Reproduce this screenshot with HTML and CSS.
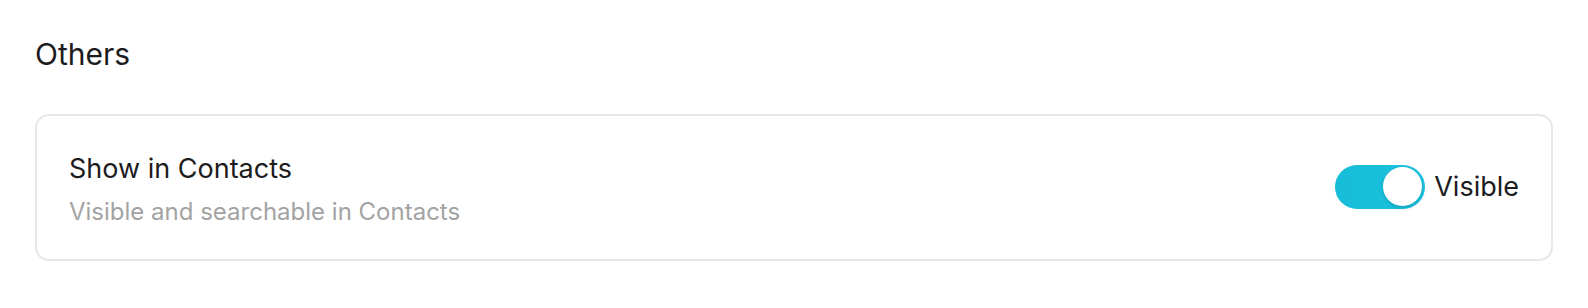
FILE: index.html
```html
<!DOCTYPE html>
<html lang="en">
<head>
<meta charset="utf-8">
<title>Others</title>
<link rel="stylesheet" href="styles.css">
</head>
<body>
<main class="page">
  <h2 class="section-title">Others</h2>
  <section class="card">
    <div class="row">
      <div class="row-text">
        <div class="row-title">Show in Contacts</div>
        <div class="row-desc">Visible and searchable in Contacts</div>
      </div>
      <label class="toggle-wrap">
        <span class="toggle on"><span class="knob"></span></span>
        <span class="toggle-label">Visible</span>
      </label>
    </div>
  </section>
</main>
</body>
</html>
```
FILE: styles.css
```css
* { box-sizing: border-box; }
html, body { margin: 0; padding: 0; background: #ffffff; }
body {
  font-family: Inter, "Noto Sans", "Liberation Sans", sans-serif;
  color: #1c1c1e;
}
.page {
  padding: 36px 35px 0 35px;
}
.section-title {
  margin: 0 0 42px 0;
  font-size: 30px;
  line-height: 36px;
  font-weight: 400;
  color: #1c1c1e;
}
.card {
  border: 2px solid #e8e8e8;
  border-radius: 14px;
  height: 147px;
  padding: 36px 32px 0 32px;
}
.row {
  display: flex;
  align-items: center;
  justify-content: space-between;
}
.row-text {
  display: flex;
  flex-direction: column;
  gap: 11px;
}
.row-title {
  font-size: 27px;
  line-height: 34px;
  color: #1c1c1e;
}
.row-desc {
  font-size: 24px;
  line-height: 30px;
  color: #a3a3a3;
}
.toggle-wrap {
  display: flex;
  align-items: center;
  gap: 9px;
  margin-bottom: 6px;
}
.toggle {
  width: 90px;
  height: 44px;
  border-radius: 22px;
  background: linear-gradient(90deg, #16bcd8, #1bc3df);
  display: flex;
  align-items: center;
  justify-content: flex-end;
  padding: 0 3px;
}
.knob {
  width: 39px;
  height: 39px;
  border-radius: 50%;
  background: #ffffff;
  box-shadow: 0 2px 4px rgba(0,0,0,0.15);
}
.toggle-label {
  font-size: 27px;
  line-height: 34px;
  color: #1c1c1e;
}
```
